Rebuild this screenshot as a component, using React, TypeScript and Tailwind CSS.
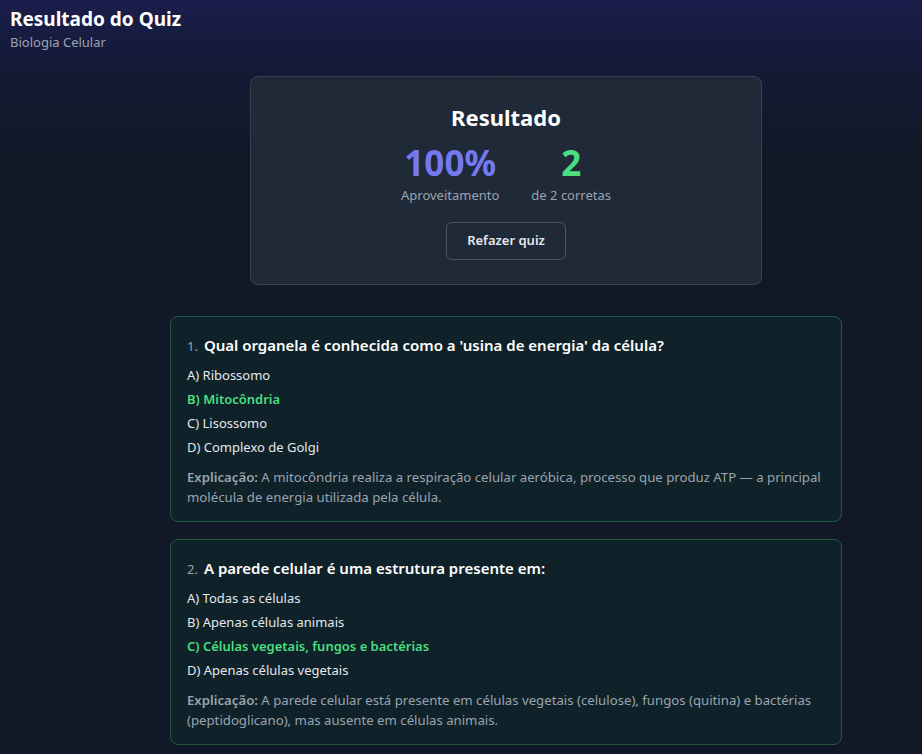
import React from "react";

type Q = {
  n: number;
  q: string;
  options: string[];
  correct: number;
  exp: string;
};

const questions: Q[] = [
  {
    n: 1,
    q: "Qual organela é conhecida como a 'usina de energia' da célula?",
    options: ["A) Ribossomo", "B) Mitocôndria", "C) Lisossomo", "D) Complexo de Golgi"],
    correct: 1,
    exp: "A mitocôndria realiza a respiração celular aeróbica, processo que produz ATP — a principal molécula de energia utilizada pela célula.",
  },
  {
    n: 2,
    q: "A parede celular é uma estrutura presente em:",
    options: [
      "A) Todas as células",
      "B) Apenas células animais",
      "C) Células vegetais, fungos e bactérias",
      "D) Apenas células vegetais",
    ],
    correct: 2,
    exp: "A parede celular está presente em células vegetais (celulose), fungos (quitina) e bactérias (peptidoglicano), mas ausente em células animais.",
  },
];

export default function App() {
  return (
    <div
      className="min-h-[754px] w-full bg-[linear-gradient(to_bottom,#1b1e4b_0px,#151b3c_50px,#111a30_90px,#111827_160px)] text-white"
      style={{ fontFamily: '"Noto Sans", "Open Sans", sans-serif' }}
    >
      <header className="px-[10px] pt-[6px]">
        <h1 className="text-[19px] font-bold leading-[26px] text-white">Resultado do Quiz</h1>
        <p className="text-[13px] leading-[20px] text-[#9ca3af]">Biologia Celular</p>
      </header>

      <main className="pl-[90px] pt-[24px] pb-[10px]">
        <div className="mx-auto flex w-[672px] flex-col items-center">
          <section className="w-[512px] rounded-lg border border-[#374151] bg-[#1f2937] px-6 pt-6 pb-6 text-center">
            <h2 className="text-[22px] font-bold leading-[32px] text-white">Resultado</h2>
            <div className="mt-[10px] flex justify-center gap-[32px]">
              <div className="flex flex-col items-center">
                <div className="text-[35px] font-bold leading-[40px] text-[#7479f2]">100%</div>
                <div className="mt-[2px] text-[13px] leading-[20px] text-[#9ca3af]">Aproveitamento</div>
              </div>
              <div className="flex flex-col items-center">
                <div className="text-[35px] font-bold leading-[40px] text-[#4ade80]">2</div>
                <div className="mt-[2px] text-[13px] leading-[20px] text-[#9ca3af]">de 2 corretas</div>
              </div>
            </div>
            <button className="mt-[17px] h-[38px] w-[120px] rounded-md border border-[#4b5563] bg-transparent text-[13px] font-semibold text-[#e5e7eb]">
              Refazer quiz
            </button>
          </section>

          <div className="mt-[31px] flex w-full flex-col gap-[17px]">
            {questions.map((q) => (
              <article
                key={q.n}
                className="rounded-lg border border-[#1d5a3f] bg-[#0f2229] px-4 pt-[15px] pb-[14px]"
              >
                <div className="flex items-baseline leading-[26px]">
                  <span className="mr-[6px] text-[13px] text-[#9ca3af]">{q.n}.</span>
                  <span className="text-[15px] font-semibold text-white">{q.q}</span>
                </div>
                <ul className="mt-[4px] flex flex-col">
                  {q.options.map((o, i) => (
                    <li
                      key={o}
                      className={
                        i === q.correct
                          ? "text-[13px] font-semibold leading-[24px] text-[#4ade80]"
                          : "text-[13px] leading-[24px] text-[#e5e7eb]"
                      }
                    >
                      {o}
                    </li>
                  ))}
                </ul>
                <p className="mt-[8px] text-[13.2px] leading-[20px] text-[#9ca3af]">
                  <span className="font-semibold">Explicação:</span> {q.exp}
                </p>
              </article>
            ))}
          </div>
        </div>
      </main>
    </div>
  );
}
